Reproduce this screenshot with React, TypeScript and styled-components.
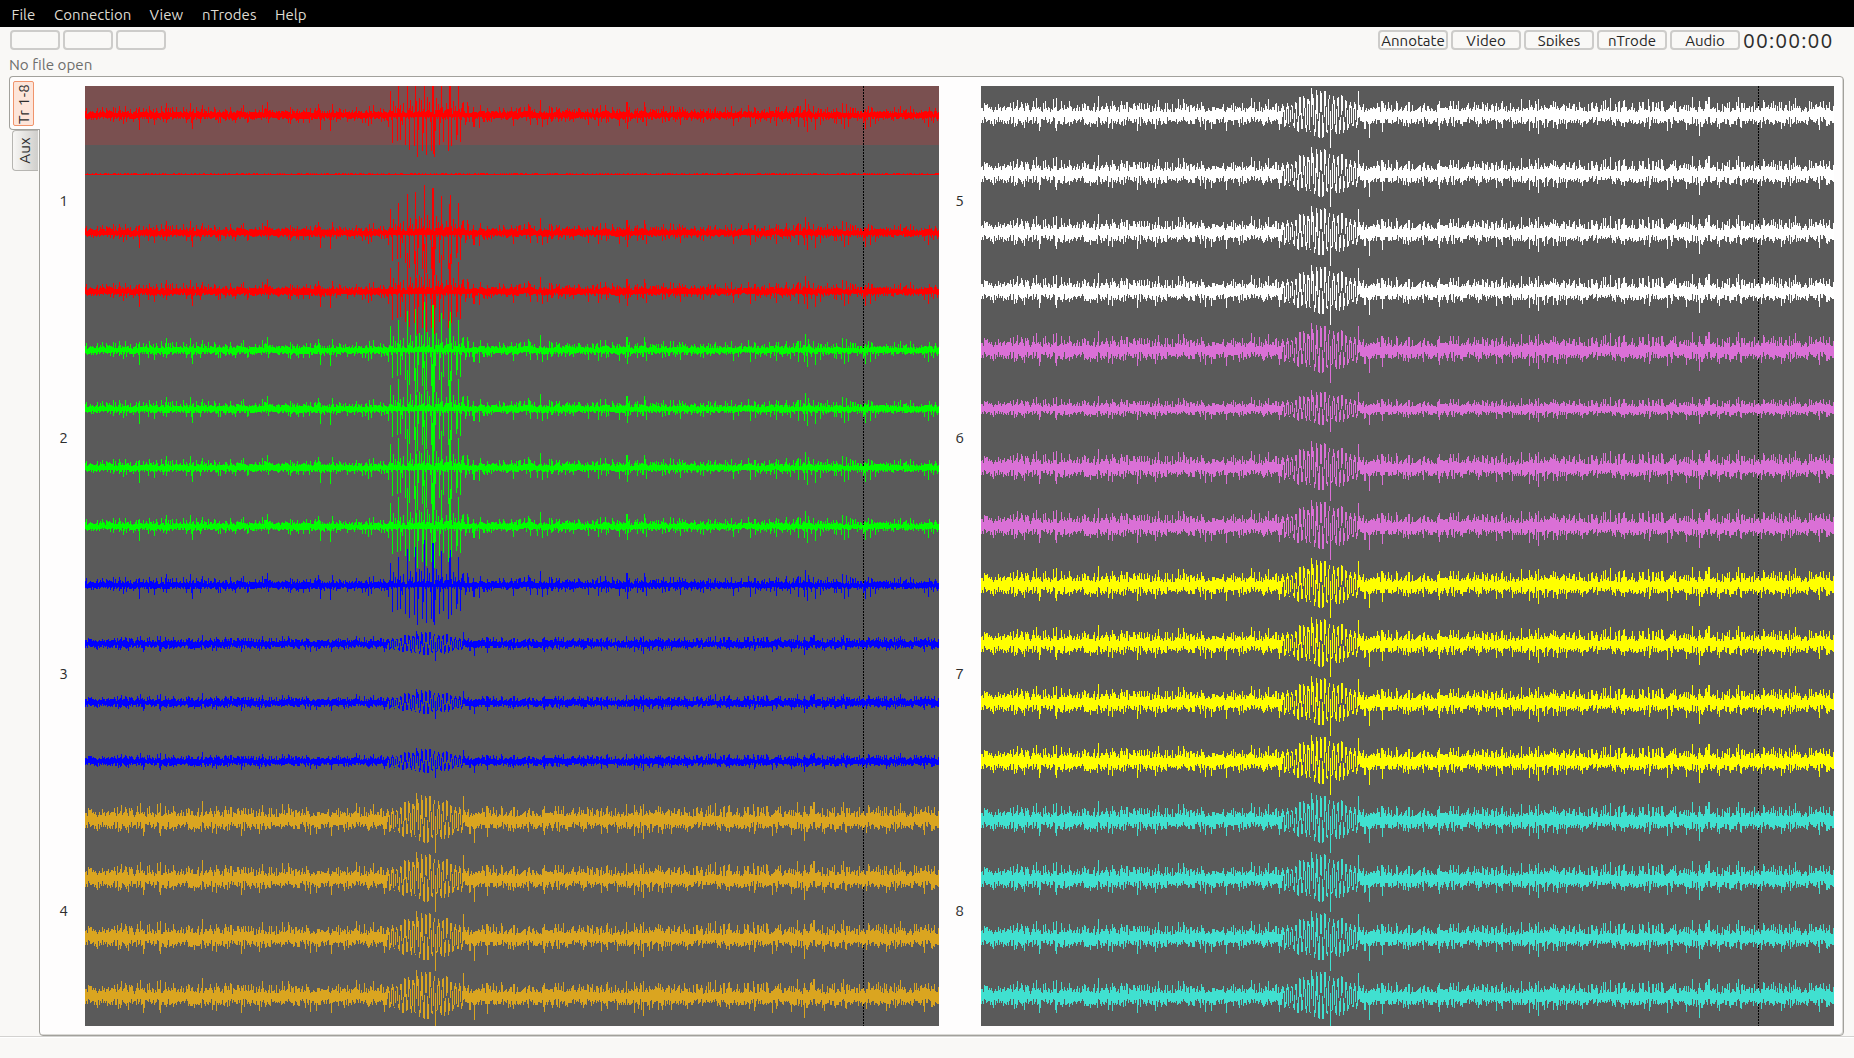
import React from "react";
import styled, { createGlobalStyle } from "styled-components";

const Global = createGlobalStyle`
  * { box-sizing: border-box; }
  html, body { margin: 0; padding: 0; background: #f9f8f6; }
  body { font-family: Ubuntu, "Noto Sans", "Open Sans", sans-serif; color: #2d2d2d; overflow: hidden; }
`;

const Window = styled.div`
  width: 1854px;
  height: 1058px;
  display: flex;
  flex-direction: column;
  background: #f9f8f6;
`;

const MenuBar = styled.nav`
  height: 27px;
  flex: none;
  display: flex;
  align-items: center;
  padding: 2px 0 0 11.5px;
  background: #000;
  color: #dfdbd2;
  font-size: 15px;
  line-height: 20px;
`;

const MenuItem = styled.span<{ $width: number }>`
  width: ${(p) => p.$width}px;
  white-space: nowrap;
`;

const Toolbar = styled.div`
  height: 26px;
  flex: none;
  display: flex;
  align-items: center;
  gap: 3px;
  padding: 0 22px 0 10px;
`;

const ToolButton = styled.button<{ $width: number }>`
  width: ${(p) => p.$width}px;
  height: 20px;
  flex: none;
  display: flex;
  justify-content: center;
  margin: 0;
  padding: 0;
  border: 2px solid #cdccca;
  border-radius: 4px;
  background: #f9f8f6;
  color: #262626;
  font: 15px/18px Ubuntu, "Noto Sans", sans-serif;
  white-space: nowrap;
  overflow: hidden;
`;

const ButtonText = styled.span`
  height: 14px;
  overflow: hidden;
`;

const Spacer = styled.div`
  flex: 1;
`;

const Clock = styled.span`
  width: 89px;
  flex: none;
  font-size: 21px;
  line-height: 22px;
  letter-spacing: 1.15px;
  white-space: nowrap;
`;

const FileStatus = styled.div`
  height: 23px;
  flex: none;
  padding: 2px 0 0 9px;
  font-size: 15.2px;
  line-height: 20px;
  color: #6e6e6c;
`;

const TabArea = styled.div`
  height: 960px;
  flex: none;
  display: flex;
  padding: 0 10px 0 9px;
`;

const TabStrip = styled.div`
  width: 31px;
  flex: none;
  display: flex;
  flex-direction: column;
  align-items: flex-end;
  z-index: 1;
`;

const ActiveTab = styled.div`
  width: 31px;
  height: 54px;
  padding: 4px 0 0 3px;
  border: 1px solid #a2a19c;
  border-right: 0;
  border-radius: 4px 0 0 4px;
  background: #fefdfd;
`;

const TabFocus = styled.div`
  width: 21px;
  height: 45px;
  display: flex;
  align-items: center;
  justify-content: center;
  border: 1px solid #f0946c;
  border-radius: 2px;
  background: #fde5da;
`;

const IdleTab = styled.div`
  width: 26px;
  height: 41px;
  margin-right: 2px;
  display: flex;
  align-items: center;
  justify-content: center;
  padding-right: 2px;
  border: 1px solid #b6b5b1;
  border-right: 0;
  border-radius: 4px 0 0 4px;
  background: linear-gradient(90deg, #f8f7f5, #cfcecb);
`;

const TabText = styled.span`
  writing-mode: vertical-rl;
  transform: rotate(180deg);
  font-size: 15.2px;
  line-height: 20px;
  letter-spacing: 0.2px;
  white-space: nowrap;
`;

const Pane = styled.div`
  width: 1805px;
  margin-left: -1px;
  display: flex;
  padding: 6px 8px 6px 0;
  border: 1px solid #a2a19c;
  border-radius: 0 4px 4px 4px;
  background: #fefdfd;
  box-shadow: inset -1px -1px 0 #d9d8d5;
`;

const Bank = styled.section`
  display: flex;
`;

const Labels = styled.div<{ $width: number }>`
  width: ${(p) => p.$width}px;
  height: 946px;
  display: grid;
  grid-template-rows: repeat(4, 1fr);
  align-items: center;
  padding-right: 17px;
  text-align: right;
  font-size: 15.5px;
  line-height: 20px;
`;

const Plot = styled.div<{ $width: number }>`
  width: ${(p) => p.$width}px;
  height: 940px;
  margin-top: 3px;
  background: #5a5a5a;
  overflow: hidden;

  svg {
    display: block;
  }
`;

const Footer = styled.footer`
  flex: 1;
  border-top: 1px solid #d3d2d0;
  box-shadow: inset 0 1px 0 #fff;
`;

type Spike = [number, number];
type Column = [number, number];

const PITCH = 58.75;
const COLUMNS = 854;

/* Peak lists hold [column, height in px] for events standing out of the noise. */
const sharpUp: Spike[] = [
  [30, 7], [40, 9], [54, 8], [64, 9], [76, 9], [81, 12], [105, 12], [117, 10], [123, 8], [129, 8],
  [158, 10], [177, 10], [182, 13], [233, 11], [247, 11], [260, 6], [271, 8], [284, 9], [288, 10],
  [295, 7], [305, 24], [308, 14], [310, 9], [313, 30], [315, 10], [318, 12], [322, 39], [325, 15],
  [327, 9], [330, 41], [331, 14], [334, 17], [336, 15], [339, 48], [342, 18], [344, 13], [347, 45],
  [348, 45], [351, 17], [353, 11], [356, 37], [361, 12], [364, 29], [365, 38], [368, 14], [370, 9],
  [373, 30], [377, 12], [378, 13], [382, 13], [388, 8], [395, 10], [402, 7], [426, 8], [435, 8],
  [443, 11], [445, 8], [455, 15], [464, 9], [471, 8], [494, 7], [515, 10], [520, 10], [534, 6],
  [541, 13], [542, 13], [544, 8], [559, 13], [578, 9], [597, 8], [630, 8], [663, 10], [669, 8],
  [693, 8], [712, 9], [715, 9], [720, 16], [723, 11], [728, 9], [733, 7], [757, 12], [761, 11],
  [783, 9], [786, 8], [815, 9], [844, 8], [850, 7],
];
const sharpDown: Spike[] = [
  [38, 9], [54, 15], [63, 8], [69, 10], [81, 8], [107, 14], [115, 8], [133, 8], [162, 8], [235, 15],
  [245, 16], [277, 8], [283, 11], [286, 9], [299, 6], [303, 12], [307, 28], [312, 26], [315, 25],
  [317, 10], [320, 30], [324, 35], [329, 31], [332, 42], [333, 15], [337, 36], [338, 18], [341, 40],
  [346, 36], [348, 39], [349, 42], [350, 16], [354, 30], [358, 27], [363, 36], [366, 31], [371, 25],
  [372, 20], [375, 27], [380, 10], [388, 12], [389, 12], [394, 13], [402, 7], [428, 11], [445, 10],
  [452, 10], [457, 12], [462, 10], [503, 10], [513, 11], [534, 11], [542, 14], [552, 8], [561, 11],
  [577, 8], [595, 10], [648, 11], [665, 12], [670, 9], [691, 11], [705, 9], [713, 12], [719, 12],
  [722, 17], [730, 15], [735, 10], [759, 14], [763, 12], [780, 14], [785, 12], [790, 9], [839, 8],
  [843, 12],
];
const broadUp: Spike[] = [
  [3, 12], [17, 11], [29, 12], [32, 13], [46, 12], [52, 14], [55, 17], [64, 14], [72, 16], [75, 17],
  [83, 10], [101, 11], [117, 19], [126, 9], [131, 14], [146, 13], [158, 12], [160, 12], [174, 11],
  [186, 12], [203, 16], [217, 11], [221, 13], [243, 11], [262, 12], [271, 17], [274, 13], [288, 16],
  [302, 11], [378, 24], [402, 14], [417, 12], [428, 13], [444, 12], [459, 14], [470, 14], [473, 14],
  [488, 12], [494, 13], [502, 13], [516, 12], [530, 12], [541, 16], [549, 15], [555, 14], [558, 16],
  [573, 14], [612, 13], [616, 12], [630, 17], [644, 15], [668, 16], [672, 13], [693, 13], [712, 18],
  [719, 14], [728, 18], [729, 18], [758, 18], [783, 15], [801, 13], [809, 14], [815, 17], [829, 14],
  [840, 13], [843, 14],
];
const broadDown: Spike[] = [
  [12, 11], [33, 12], [43, 13], [58, 16], [75, 16], [127, 13], [131, 14], [156, 16], [174, 14],
  [225, 15], [231, 14], [246, 16], [299, 15], [350, 33], [389, 23], [402, 17], [428, 12], [459, 15],
  [516, 14], [532, 13], [549, 16], [558, 19], [573, 13], [602, 12], [644, 12], [669, 14], [687, 16],
  [706, 15], [719, 21], [739, 14], [801, 14], [839, 15],
];

function noiseSource(seed: number) {
  let state = seed;
  return () => {
    state = (state * 1664525 + 1013904223) >>> 0;
    return state / 4294967296;
  };
}

function addSpikes(columns: Column[], up: Spike[], down: Spike[]) {
  up.forEach(([x, h]) => {
    if (columns[x]) columns[x] = [-h, Math.min(columns[x][1], 2)];
  });
  down.forEach(([x, h]) => {
    if (columns[x]) columns[x] = [Math.min(columns[x][0], 0), h];
  });
}

function flatSignal(): Column[] {
  const rnd = noiseSource(9);
  return Array.from({ length: COLUMNS }, (): Column => [rnd() > 0.6 ? -1 : 0, 1]);
}

function sharpSignal(): Column[] {
  const rnd = noiseSource(71);
  const columns: Column[] = [];
  for (let x = 0; x < COLUMNS; x++) {
    const up = 1.8 + rnd() * 3 + (rnd() > 0.65 ? rnd() * 5 : 0);
    const down = 1.6 + rnd() * 2.7 + (rnd() > 0.75 ? rnd() * 4.5 : 0);
    columns.push([-up, down]);
  }
  addSpikes(columns, sharpUp, sharpDown);
  return columns;
}

function broadSignal(): Column[] {
  const rnd = noiseSource(1234);
  const columns: Column[] = [];
  for (let x = 0; x < COLUMNS; x++) {
    const up = 3 + rnd() * 6 + (rnd() > 0.6 ? rnd() * 7 : 0);
    const down = 3 + rnd() * 6 + (rnd() > 0.7 ? rnd() * 5 : 0);
    columns.push([-up, down]);
  }
  addSpikes(columns, broadUp, broadDown);
  for (let x = 303; x < 380; x++) {
    const envelope = 10 + 12.5 * Math.exp(-Math.pow((x - 343) / 26, 2));
    const wave = (t: number) => -envelope * Math.cos((2 * Math.PI * (t - 336.3)) / 4.2);
    const a = wave(x - 0.45);
    const b = wave(x + 0.45);
    const upJitter = rnd() * 6 - 2;
    const downJitter = rnd() * 5 - 2;
    columns[x] = [Math.min(a, b) - upJitter, Math.max(a, b) * 0.95 + downJitter];
  }
  columns[350] = [-4, 33];
  columns[331] = [-27, 2];
  columns[336] = [-25, -1];
  columns[378] = [-24, 3];
  return columns;
}

const flat = flatSignal();
const sharp = sharpSignal();
const broad = broadSignal();

function tracePath(signal: Column[], channel: number, gain: number, width: number) {
  const base = PITCH * (channel + 0.5);
  let d = "";
  for (let x = 0; x < width; x++) {
    const source = signal[width < COLUMNS && x > 200 ? x + 1 : x] || signal[x];
    const top = Math.round(base + source[0] * gain);
    const bottom = Math.max(top + 1, Math.round(base + source[1] * gain));
    d += `M${x} ${top}h1V${bottom}h-1z`;
  }
  return d;
}

interface Trace {
  color: string;
  signal: Column[];
  gain: number;
}

const group = (color: string, signal: Column[], gains: number[]): Trace[] =>
  gains.map((gain) => ({ color, signal, gain }));

const leftTraces: Trace[] = [
  ...group("#ff0000", sharp, [1]),
  ...group("#ff0000", flat, [1]),
  ...group("#ff0000", sharp, [1, 1]),
  ...group("#00ff00", sharp, [1, 1, 1, 0.98]),
  ...group("#0000ff", sharp, [0.94]),
  ...group("#0000ff", broad, [0.5, 0.5, 0.5]),
  ...group("#daa520", broad, [1, 1, 1, 1]),
];
const rightTraces: Trace[] = [
  ...group("#ffffff", broad, [1, 1, 1, 1]),
  ...group("#da70d6", broad, [1, 0.7, 1, 1]),
  ...group("#ffff00", broad, [1, 1, 1, 1]),
  ...group("#40e0d0", broad, [1, 1, 1, 1]),
];

interface TracePlotProps {
  traces: Trace[];
  width: number;
  cursor: number;
  highlight?: boolean;
}

function TracePlot({ traces, width, cursor, highlight }: TracePlotProps) {
  return (
    <Plot $width={width}>
      <svg width={width} height={940} shapeRendering="crispEdges">
        {highlight && <rect width={width} height={59} fill="#7a5050" />}
        <path d={`M${cursor + 0.5} 0V940`} stroke="#000" strokeDasharray="2 1" />
        {traces.map((t, i) => (
          <path key={i} d={tracePath(t.signal, i, t.gain, width)} fill={t.color} />
        ))}
      </svg>
    </Plot>
  );
}

const menus: [string, number][] = [
  ["File", 42.5], ["Connection", 95.5], ["View", 52.5], ["nTrodes", 73], ["Help", 40],
];
const actions = ["Annotate", "Video", "Spikes", "nTrode", "Audio"];

export default function App() {
  return (
    <Window>
      <Global />
      <MenuBar>
        {menus.map(([name, width]) => (
          <MenuItem key={name} $width={width}>{name}</MenuItem>
        ))}
      </MenuBar>
      <Toolbar>
        <ToolButton $width={50} />
        <ToolButton $width={50} />
        <ToolButton $width={50} />
        <Spacer />
        {actions.map((name) => (
          <ToolButton key={name} $width={70}>
            <ButtonText>{name}</ButtonText>
          </ToolButton>
        ))}
        <Clock>00:00:00</Clock>
      </Toolbar>
      <FileStatus>No file open</FileStatus>
      <TabArea>
        <TabStrip>
          <ActiveTab>
            <TabFocus><TabText>Tr 1-8</TabText></TabFocus>
          </ActiveTab>
          <IdleTab><TabText>Aux</TabText></IdleTab>
        </TabStrip>
        <Pane>
          <Bank>
            <Labels $width={45}>
              {[1, 2, 3, 4].map((n) => <span key={n}>{n}</span>)}
            </Labels>
            <TracePlot traces={leftTraces} width={854} cursor={778} highlight />
          </Bank>
          <Bank>
            <Labels $width={42}>
              {[5, 6, 7, 8].map((n) => <span key={n}>{n}</span>)}
            </Labels>
            <TracePlot traces={rightTraces} width={853} cursor={777} />
          </Bank>
        </Pane>
      </TabArea>
      <Footer />
    </Window>
  );
}
